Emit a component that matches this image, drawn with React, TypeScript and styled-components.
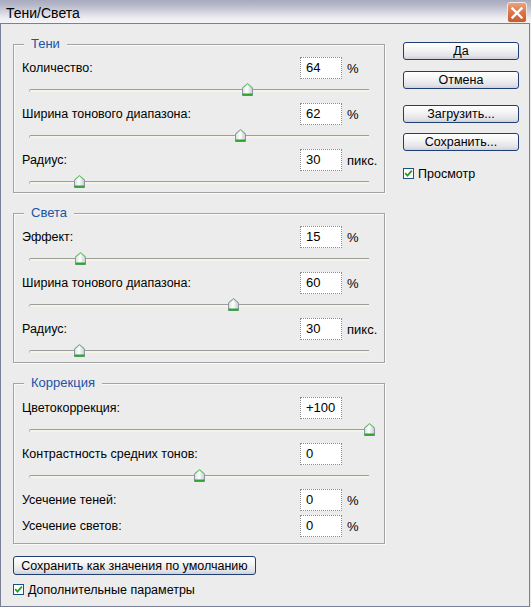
import React from "react";
import styled, { createGlobalStyle } from "styled-components";

const Global = createGlobalStyle`
  html, body { margin: 0; padding: 0; background: #ececec; }
  body {
    font-family: Tahoma, "Liberation Sans", Arial, sans-serif;
    font-size: 12.5px;
    color: #000;
  }
  * { box-sizing: border-box; }
`;

const Window = styled.div`
  width: 531px;
  height: 607px;
  display: flex;
  flex-direction: column;
  background: #ececec;
  overflow: hidden;
`;

const TitleBar = styled.div`
  height: 23px;
  flex: none;
  display: flex;
  align-items: center;
  justify-content: space-between;
  padding: 0 4px 0 6px;
  background: linear-gradient(
    to bottom,
    #a7a9bd 0%,
    #b9bbcc 25%,
    #d6d7e2 55%,
    #eeeef3 80%,
    #f6f6f9 100%
  );
`;

const TitleText = styled.div`
  font-size: 14px;
  color: #000;
  padding-top: 2px;
`;

const CloseBtn = styled.div`
  width: 20px;
  height: 21px;
  margin-top: 2px;
  border-radius: 3px;
  border: 1px solid #f4e6de;
  background: linear-gradient(to bottom, #eaa47c 0%, #d9764a 50%, #c9582c 100%);
  display: flex;
  align-items: center;
  justify-content: center;
`;

const Body = styled.div`
  flex: 1;
  width: 530px;
  border: 1px solid #7b7f95;
  display: flex;
  gap: 18px;
  padding: 0 10px 0 12px;
`;

const LeftCol = styled.div`
  width: 372px;
  flex: none;
  display: flex;
  flex-direction: column;
`;

const RightCol = styled.div`
  width: 116px;
  flex: none;
  display: flex;
  flex-direction: column;
  padding-top: 18px;
`;

const Group = styled.div<{ $mt: number; $pt: number; $pb: number }>`
  position: relative;
  margin-top: ${(p) => p.$mt}px;
  border: 1px solid #a3a3a3;
  box-shadow: inset 1px 1px 0 #fafafa, 1px 1px 0 #fafafa;
  padding: ${(p) => p.$pt}px 0 ${(p) => p.$pb}px 8px;
  display: flex;
  flex-direction: column;
`;

const Legend = styled.div`
  position: absolute;
  top: -9px;
  left: 10px;
  padding: 0 7px;
  line-height: 16px;
  font-size: 13px;
  color: #2152a3;
  background: #ececec;
`;

const Param = styled.div<{ $mt: number }>`
  margin-top: ${(p) => p.$mt}px;
  display: flex;
  flex-direction: column;
`;

const Row = styled.div`
  display: grid;
  grid-template-columns: 278px 42px 42px;
  align-items: center;
  height: 22px;
`;

const Label = styled.div`
  font-size: 12.5px;
  white-space: nowrap;
`;

const Field = styled.div`
  width: 42px;
  height: 22px;
  background: #fff;
  border: 1px dotted #8c8c8c;
  padding-left: 5px;
  line-height: 20px;
  font-size: 13px;
  color: #000;
`;

const Unit = styled.div`
  padding-left: 5px;
  font-size: 13px;
  white-space: nowrap;
`;

const SliderWrap = styled.div`
  position: relative;
  height: 21px;
  margin: 0 15px 0 7px;
`;

const Track = styled.div`
  margin-top: 10px;
  height: 3px;
  border-top: 1px solid #9d9d9d;
  border-left: 1px solid #b4b4b4;
  border-radius: 2px 0 0 2px;
  background: #f6f4e9;
`;

const ThumbBox = styled.div`
  position: absolute;
  top: 4px;
  width: 11px;
  height: 13px;
  margin-left: -5px;
`;

const Button = styled.div<{ $h: number; $mt: number; $w?: number }>`
  height: ${(p) => p.$h}px;
  margin-top: ${(p) => p.$mt}px;
  width: ${(p) => (p.$w ? `${p.$w}px` : "100%")};
  border: 1px solid #1f3f74;
  border-radius: 3px;
  background: linear-gradient(to bottom, #ffffff 0%, #f4f4f4 40%, #e3e3e8 80%, #cfd0d8 100%);
  display: flex;
  align-items: center;
  justify-content: center;
  font-size: 12.5px;
  color: #000;
  white-space: nowrap;
`;

const CheckRow = styled.div<{ $mt: number }>`
  margin-top: ${(p) => p.$mt}px;
  display: flex;
  align-items: center;
  gap: 4px;
  height: 13px;
  font-size: 12.5px;
`;

const CheckBox = styled.div`
  width: 11px;
  height: 11px;
  border: 1px solid #1c5180;
  background: #fff;
  display: flex;
  align-items: center;
  justify-content: center;
`;

const Thumb = ({ frac }: { frac: number }) => (
  <ThumbBox style={{ left: `${frac * 100}%` }}>
    <svg width="11" height="13" viewBox="0 0 11 13">
      <defs>
        <linearGradient id="thumbg" x1="0" x2="1" y1="0" y2="0">
          <stop offset="0" stopColor="#d9dce2" />
          <stop offset="0.45" stopColor="#ffffff" />
          <stop offset="1" stopColor="#c4c9d1" />
        </linearGradient>
      </defs>
      <path d="M5.5 0.5 L10.5 4.8 L10.5 12.5 L0.5 12.5 L0.5 4.8 Z" fill="url(#thumbg)" stroke="#8b96a6" />
      <path d="M1 4.8 L5.5 1 L10 4.8" fill="none" stroke="#62c862" strokeWidth="1" />
      <rect x="0.5" y="10.5" width="10" height="2.2" fill="#2fa42f" />
    </svg>
  </ThumbBox>
);

const Check = () => (
  <CheckBox>
    <svg width="9" height="9" viewBox="0 0 9 9">
      <path d="M1.2 4.2 L3.5 6.6 L7.8 1.6" fill="none" stroke="#21a121" strokeWidth="1.8" />
    </svg>
  </CheckBox>
);

type P = { label: string; value: string; unit?: string; frac?: number; mt: number };

const ParamRow = ({ label, value, unit, frac, mt }: P) => (
  <Param $mt={mt}>
    <Row>
      <Label>{label}</Label>
      <Field>{value}</Field>
      <Unit>{unit ?? ""}</Unit>
    </Row>
    {frac !== undefined && (
      <SliderWrap>
        <Track />
        <Thumb frac={frac} />
      </SliderWrap>
    )}
  </Param>
);

export default function App() {
  return (
    <>
      <Global />
      <Window>
        <TitleBar>
          <TitleText>Тени/Света</TitleText>
          <CloseBtn>
            <svg width="12" height="12" viewBox="0 0 12 12">
              <path d="M1.5 1.5 L10.5 10.5 M10.5 1.5 L1.5 10.5" stroke="#fff" strokeWidth="2.4" strokeLinecap="square" />
            </svg>
          </CloseBtn>
        </TitleBar>
        <Body>
          <LeftCol>
            <Group $mt={20} $pt={12} $pb={0}>
              <Legend>Тени</Legend>
              <ParamRow mt={0} label="Количество:" value="64" unit="%" frac={0.64} />
              <ParamRow mt={3} label="Ширина тонового диапазона:" value="62" unit="%" frac={0.62} />
              <ParamRow mt={3} label="Радиус:" value="30" unit="пикс." frac={0.147} />
            </Group>
            <Group $mt={20} $pt={12} $pb={1}>
              <Legend>Света</Legend>
              <ParamRow mt={0} label="Эффект:" value="15" unit="%" frac={0.15} />
              <ParamRow mt={3} label="Ширина тонового диапазона:" value="60" unit="%" frac={0.6} />
              <ParamRow mt={3} label="Радиус:" value="30" unit="пикс." frac={0.147} />
            </Group>
            <Group $mt={20} $pt={13} $pb={6}>
              <Legend>Коррекция</Legend>
              <ParamRow mt={0} label="Цветокоррекция:" value="+100" frac={1} />
              <ParamRow mt={3} label="Контрастность средних тонов:" value="0" frac={0.5} />
              <ParamRow mt={3} label="Усечение теней:" value="0" unit="%" />
              <ParamRow mt={4} label="Усечение светов:" value="0" unit="%" />
            </Group>
            <Button $h={19} $mt={12} $w={243}>Сохранить как значения по умолчанию</Button>
            <CheckRow $mt={8}>
              <Check />
              <span>Дополнительные параметры</span>
            </CheckRow>
          </LeftCol>
          <RightCol>
            <Button $h={18} $mt={0}>Да</Button>
            <Button $h={18} $mt={11}>Отмена</Button>
            <Button $h={18} $mt={16}>Загрузить...</Button>
            <Button $h={18} $mt={10}>Сохранить...</Button>
            <CheckRow $mt={16}>
              <Check />
              <span>Просмотр</span>
            </CheckRow>
          </RightCol>
        </Body>
      </Window>
    </>
  );
}
